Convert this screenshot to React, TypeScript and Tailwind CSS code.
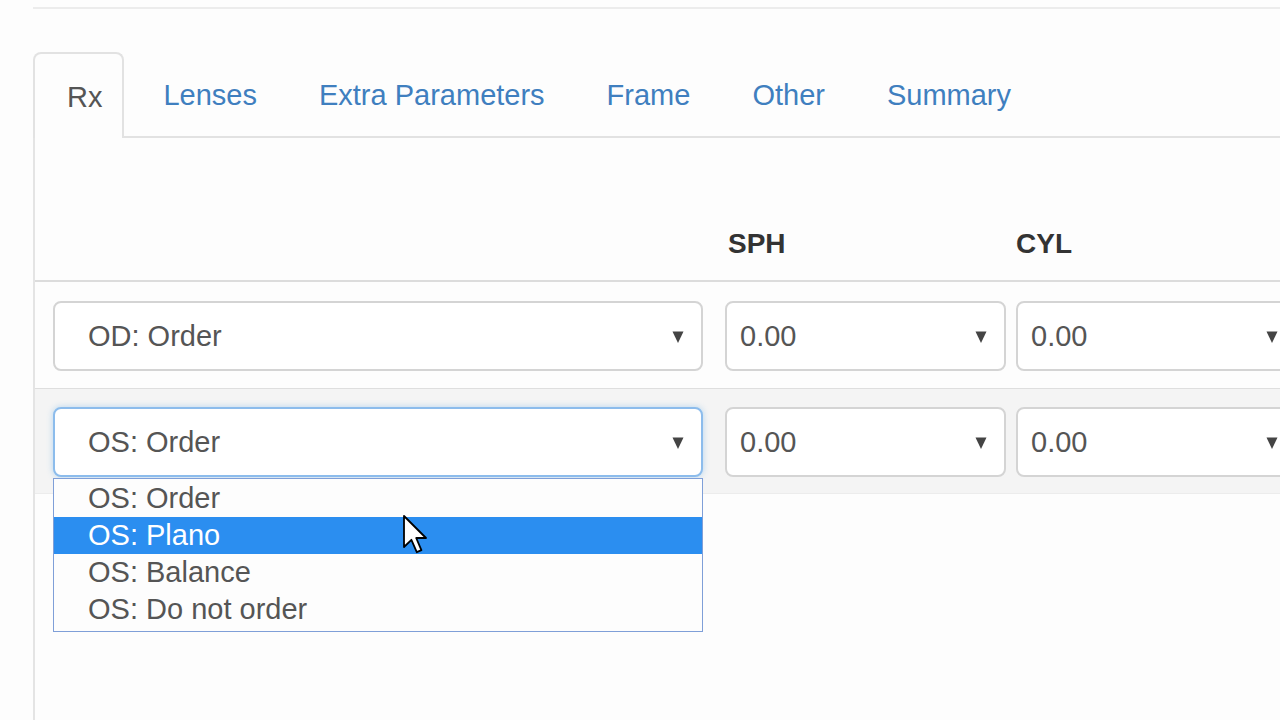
import React from "react";

const font = { fontFamily: '"Liberation Sans", Arial, Helvetica, sans-serif' };

const tabs = ["Lenses", "Extra Parameters", "Frame", "Other", "Summary"];
const osOptions = ["OS: Order", "OS: Plano", "OS: Balance", "OS: Do not order"];

function Caret() {
  return (
    <svg width="12" height="14" viewBox="0 0 12 14" className="shrink-0">
      <path d="M0.5 1.5 L11.5 1.5 L6 13 Z" fill="#444" />
    </svg>
  );
}

function FakeSelect({
  value,
  width,
  indent,
  focused,
}: {
  value: string;
  width: string;
  indent: string;
  focused?: boolean;
}) {
  return (
    <div
      className={`${width} ${indent} flex h-[70px] items-center justify-between rounded-[8px] border-2 bg-white pr-[17px] pt-[2px] text-[29px] text-[#555] ${
        focused
          ? "border-[#8cbcec] shadow-[0_0_6px_rgba(102,175,233,0.45)]"
          : "border-[#d4d4d4]"
      }`}
    >
      <span>{value}</span>
      <Caret />
    </div>
  );
}

function Pointer() {
  return (
    <svg width="25" height="39" viewBox="0 0 12.5 19.5" className="absolute left-[403px] top-[515px]">
      <path
        d="M0.5 0.5 L0.5 16 L4.2 12.4 L6.9 18.6 L9.2 17.6 L6.6 11.5 L11.5 11.5 Z"
        fill="#fff"
        stroke="#000"
        strokeWidth="0.9"
        strokeLinejoin="round"
      />
    </svg>
  );
}

export default function App() {
  return (
    <div className="relative flex h-[720px] w-[1280px] overflow-hidden bg-[#fdfdfd]" style={font}>
      <div className="w-[2px] bg-[#111]" />
      <div className="flex flex-1 flex-col pl-[33px]">
        <div className="mt-[7px] h-[2px] bg-[#ececec]" />

        {/* tab strip */}
        <div className="mt-[43px] flex border-b-2 border-[#e2e2e2]">
          <div className="-mb-[2px] flex h-[86px] items-center rounded-t-[8px] border-2 border-b-0 border-[#e2e2e2] bg-[#fdfdfd] pl-[32px] pr-[20px] pt-[4px] text-[29px] text-[#555]">
            Rx
          </div>
          <div className="ml-[9px] flex">
            {tabs.map((t) => (
              <div key={t} className="mr-[2px] flex h-[84px] items-center px-[30px] pt-[4px] text-[29px] text-[#3f7fbf]">
                {t}
              </div>
            ))}
          </div>
        </div>

        {/* tab content */}
        <div className="flex flex-1 flex-col border-l-2 border-[#e4e4e4]">
          <div className="flex h-[144px] items-end border-b-2 border-[#dcdcdc] pb-[15px] text-[28px] font-bold text-[#333]">
            <div className="w-[693px]" />
            <div className="w-[288px]">SPH</div>
            <div>CYL</div>
          </div>

          <div className="flex h-[107px] items-start gap-[22px] border-b border-[#dedede] bg-[#fdfdfd] pl-[18px] pt-[19px]">
            <FakeSelect value="OD: Order" width="w-[650px]" indent="pl-[33px]" />
            <div className="flex gap-[10px]">
              <FakeSelect value="0.00" width="w-[281px]" indent="pl-[13px]" />
              <FakeSelect value="0.00" width="w-[281px]" indent="pl-[13px]" />
            </div>
          </div>

          <div className="flex h-[105px] items-start gap-[22px] border-b border-[#ececec] bg-[#f4f4f4] pl-[18px] pt-[18px]">
            <FakeSelect value="OS: Order" width="w-[650px]" indent="pl-[33px]" focused />
            <div className="flex gap-[10px]">
              <FakeSelect value="0.00" width="w-[281px]" indent="pl-[13px]" />
              <FakeSelect value="0.00" width="w-[281px]" indent="pl-[13px]" />
            </div>
          </div>
        </div>
      </div>

      {/* open option list for the OS select */}
      <div className="absolute left-[53px] top-[478px] w-[650px] border border-[#7f9fd8] bg-[#fdfdfd] pb-[3px] pt-[1px] text-[29px] text-[#555]">
        {osOptions.map((o) => (
          <div
            key={o}
            className={`flex h-[37px] items-center pl-[34px] ${
              o === "OS: Plano" ? "bg-[#2b8ef0] text-white" : ""
            }`}
          >
            {o}
          </div>
        ))}
      </div>

      <Pointer />
    </div>
  );
}
